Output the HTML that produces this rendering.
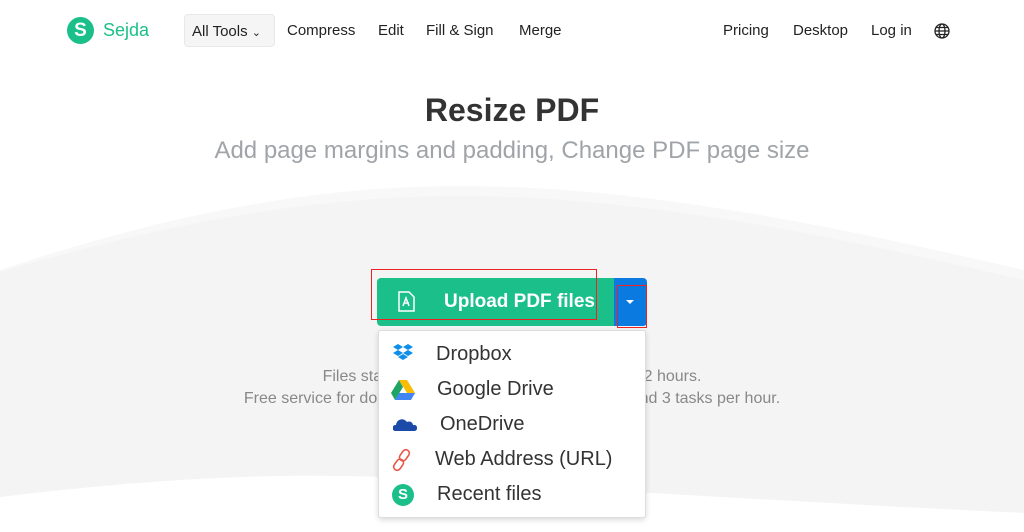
<!DOCTYPE html>
<html><head><meta charset="utf-8"><style>
*{margin:0;padding:0;box-sizing:border-box}
body{width:1024px;height:532px;overflow:hidden;background:#fff;font-family:"Liberation Sans",sans-serif;position:relative;color:#222}
.a{position:absolute;white-space:nowrap}
.nav{font-size:15px;color:#222;top:22px}
</style></head><body>
<svg class="a" style="left:0;top:0" width="1024" height="532">
<path d="M0 270 C150 220 300 186 460 186 C650 186 850 230 1024 270 L1024 532 L0 532Z" fill="#f8f8f8"/>
<path d="M0 272 C150 228 300 196 460 196 C650 196 850 240 1024 280 L1024 513 C850 505 600 490 400 478 C250 470 100 485 0 497Z" fill="#f4f4f4"/>
<path d="M0 497 C100 485 250 470 400 478 C600 490 850 505 1024 513 L1024 532 L0 532Z" fill="#fff"/>
</svg>
<div class="a" style="left:67px;top:17px;width:27px;height:27px;border-radius:50%;background:#1bbf89;color:#fff;font-weight:bold;font-size:19px;text-align:center;line-height:27px">S</div>
<div class="a" style="left:103px;top:20px;font-size:18px;color:#1bbf89">Sejda</div>
<div class="a" style="left:184px;top:14px;width:91px;height:33px;background:#f5f5f5;border:1px solid #e8e8e8;border-radius:4px"></div>
<div class="a nav" style="left:192px;top:23px">All Tools <span style="font-size:11px">&#8964;</span></div>
<div class="a nav" style="left:287px">Compress</div>
<div class="a nav" style="left:378px">Edit</div>
<div class="a nav" style="left:426px">Fill &amp; Sign</div>
<div class="a nav" style="left:519px">Merge</div>
<div class="a nav" style="left:723px">Pricing</div>
<div class="a nav" style="left:793px">Desktop</div>
<div class="a nav" style="left:871px">Log in</div>
<svg class="a" style="left:934px;top:23px" width="16" height="16" viewBox="0 0 16 16" fill="none" stroke="#222" stroke-width="1.3"><circle cx="8" cy="8" r="7"/><ellipse cx="8" cy="8" rx="3" ry="7"/><path d="M1 8h14M2 4.5h12M2 11.5h12"/></svg>
<div class="a" style="left:0;width:1024px;text-align:center;top:92px;font-size:32px;font-weight:bold;color:#333">Resize PDF</div>
<div class="a" style="left:0;width:1024px;text-align:center;top:137px;font-size:24px;color:#a0a4a8">Add page margins and padding, Change PDF page size</div>
<div class="a" style="left:0;width:1024px;text-align:center;top:366px;font-size:16px;color:#888;line-height:22px">Files stay private. Automatically deleted after 2 hours.<br>Free service for documents up to 200 pages or 50 MB and 3 tasks per hour.</div>
<div class="a" style="left:377px;top:278px;width:237px;height:48px;background:#1bbf89;border-radius:4px 0 0 4px"></div>
<div class="a" style="left:614px;top:278px;width:33px;height:48px;background:#0a7ae0;border-radius:0 4px 4px 0"></div>
<svg class="a" style="left:398px;top:291px" width="17" height="21" viewBox="0 0 17 21" fill="none" stroke="#fff" stroke-width="1.5"><path d="M1 1h10l5 5v14H1z"/><path d="M5 15l3-8 3 8M6 12h5"/></svg>
<div class="a" style="left:444px;top:291px;font-size:19px;font-weight:bold;color:#fff">Upload PDF files</div>
<div class="a" style="left:626px;top:300px;border-left:4px solid transparent;border-right:4px solid transparent;border-top:4px solid #fff"></div>
<div class="a" style="left:371px;top:269px;width:226px;height:51px;border:1.5px solid #e22"></div>
<div class="a" style="left:617px;top:285px;width:30px;height:43px;border:1.5px solid #e22"></div>
<div class="a" style="left:378px;top:330px;width:268px;height:188px;background:#fff;border:1px solid #ddd;border-radius:3px;box-shadow:0 2px 6px rgba(0,0,0,.15)"></div>
<svg class="a" style="left:392px;top:343px" width="22" height="20" viewBox="0 0 22 20" fill="#0d8ee9"><path d="M6 1l5 3-5 3-5-3zM16 1l5 3-5 3-5-3zM6 7l5 3-5 3-5-3zM16 7l5 3-5 3-5-3zM6 14l5-3 5 3-5 3z"/></svg>
<svg class="a" style="left:391px;top:379px" width="24" height="21" viewBox="0 0 24 21"><path d="M8 1h8l8 13h-8z" fill="#fbbc04"/><path d="M8 1l4 7-8 13-4-7z" fill="#1fa463"/><path d="M4 21l4-7h16l-4 7z" fill="#4285f4"/></svg>
<svg class="a" style="left:393px;top:417px" width="24" height="14" viewBox="0 0 24 14" fill="#1b4aa8"><path d="M2 14a3 3 0 0 1 1-6 6 6 0 0 1 11-3 4 4 0 0 1 6 3 3 3 0 0 1 2 6z"/></svg>
<svg class="a" style="left:391px;top:448px" width="22" height="24" viewBox="0 0 22 24" fill="none" stroke="#e8574a" stroke-width="1.6"><rect x="10" y="1" width="7" height="12" rx="3.5" transform="rotate(35 13 7)"/><rect x="4" y="11" width="7" height="12" rx="3.5" transform="rotate(35 8 17)"/></svg>
<div class="a" style="left:392px;top:484px;width:22px;height:22px;border-radius:50%;background:#1bbf89;color:#fff;font-weight:bold;font-size:15px;text-align:center;line-height:22px">S</div>
<div class="a" style="left:436px;top:341px;font-size:20px;color:#333;line-height:26px">Dropbox</div>
<div class="a" style="left:437px;top:376px;font-size:20px;color:#333;line-height:26px">Google Drive</div>
<div class="a" style="left:440px;top:411px;font-size:20px;color:#333;line-height:26px">OneDrive</div>
<div class="a" style="left:435px;top:446px;font-size:20px;color:#333;line-height:26px">Web Address (URL)</div>
<div class="a" style="left:437px;top:481px;font-size:20px;color:#333;line-height:26px">Recent files</div>
</body></html>
